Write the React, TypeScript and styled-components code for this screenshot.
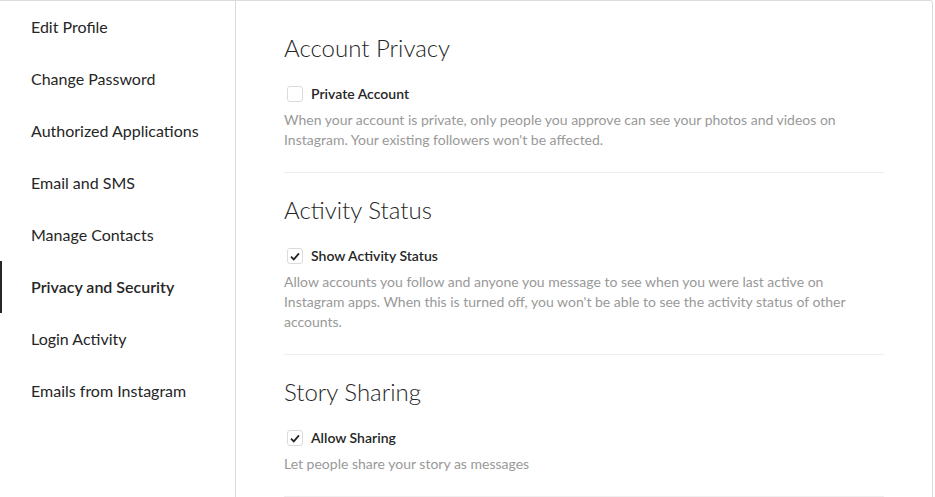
import React from "react"
import styled, { createGlobalStyle } from "styled-components"

const GlobalStyle = createGlobalStyle`
  html, body {
    margin: 0;
    padding: 0;
    background: #fff;
  }
  body {
    font-family: "Segoe UI", Lato, "Liberation Sans", sans-serif;
    color: #262626;
  }
`

const menu = [
  "Edit Profile",
  "Change Password",
  "Authorized Applications",
  "Email and SMS",
  "Manage Contacts",
  "Privacy and Security",
  "Login Activity",
  "Emails from Instagram",
]

const sections = [
  {
    title: "Account Privacy",
    label: "Private Account",
    checked: false,
    text: "When your account is private, only people you approve can see your photos and videos on Instagram. Your existing followers won't be affected.",
  },
  {
    title: "Activity Status",
    label: "Show Activity Status",
    checked: true,
    text: "Allow accounts you follow and anyone you message to see when you were last active on Instagram apps. When this is turned off, you won't be able to see the activity status of other accounts.",
  },
  {
    title: "Story Sharing",
    label: "Allow Sharing",
    checked: true,
    text: "Let people share your story as messages",
  },
]

export default function App() {
  return (
    <>
      <GlobalStyle />
      <Card>
        <Sidebar>
          {menu.map((item) => (
            <MenuItem key={item} active={item === "Privacy and Security"}>
              {item}
            </MenuItem>
          ))}
        </Sidebar>
        <Main>
          {sections.map((s) => (
            <Section key={s.title}>
              <Heading>{s.title}</Heading>
              <CheckRow>
                <Box>
                  {s.checked && (
                    <svg width='10' height='9' viewBox='0 0 10 9'>
                      <path
                        d='M1 4.6 L3.8 7.4 L9 1.4'
                        fill='none'
                        stroke='#262626'
                        strokeWidth='1.8'
                      />
                    </svg>
                  )}
                </Box>
                <Label>{s.label}</Label>
              </CheckRow>
              <Description>{s.text}</Description>
            </Section>
          ))}
        </Main>
      </Card>
    </>
  )
}

const Card = styled.div`
  display: flex;
  width: 933px;
  height: 560px;
  box-sizing: border-box;
  border: 1px solid #dbdbdb;
  border-left: none;
  border-radius: 0 3px 0 0;
  background: #fff;
`

const Sidebar = styled.ul`
  list-style: none;
  margin: 0;
  padding: 0;
  width: 236px;
  flex-shrink: 0;
  box-sizing: border-box;
  border-right: 1px solid #dbdbdb;
`

const MenuItem = styled.li<{ active?: boolean }>`
  height: 52px;
  box-sizing: border-box;
  padding: 16px 16px 16px 29px;
  border-left: 2px solid ${(p) => (p.active ? "#262626" : "transparent")};
  font-size: 16px;
  line-height: 20px;
  font-weight: ${(p) => (p.active ? 600 : 400)};
  color: #262626;
  white-space: nowrap;
`

const Main = styled.div`
  flex: 1;
  padding: 10px 48px 0;
`

const Section = styled.section`
  padding: 21px 0 22px;
  border-bottom: 1px solid #efefef;
`

const Heading = styled.h2`
  margin: 0 0 20px;
  font-size: 24px;
  line-height: 32px;
  font-weight: 300;
  color: #262626;
`

const CheckRow = styled.div`
  display: flex;
  align-items: center;
  height: 20px;
`

const Box = styled.span`
  display: flex;
  align-items: center;
  justify-content: center;
  width: 16px;
  height: 16px;
  box-sizing: border-box;
  margin-left: 3px;
  border: 1px solid #dbdbdb;
  border-radius: 3px;
  background: #fff;
`

const Label = styled.span`
  margin-left: 8px;
  font-size: 14px;
  line-height: 20px;
  font-weight: 600;
  color: #262626;
`

const Description = styled.p`
  margin: 6px 0 0;
  font-size: 14px;
  line-height: 20px;
  color: #999;
`
